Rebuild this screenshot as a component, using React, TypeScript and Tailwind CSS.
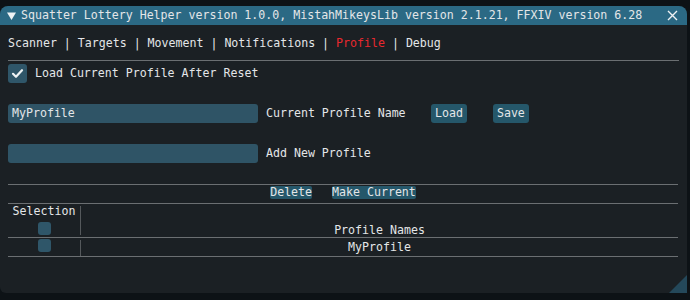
import React from 'react';

const BigCheck = () => (
  <div className="w-[19px] h-[19px] rounded-[3px] bg-[#2f5669] flex items-center justify-center shrink-0">
    <svg width="13" height="13" viewBox="0 0 13 13">
      <path d="M2 6.8 L5 9.8 L11 3.2" fill="none" stroke="#eef2f4" strokeWidth="2.2" strokeLinecap="round" strokeLinejoin="round" />
    </svg>
  </div>
);

const SmallCheck = () => <div className="w-[13px] min-w-[13px] h-[13px] rounded-[3px] bg-[#2f5669] shrink-0" />;

const Btn: React.FC<{ label: string }> = ({ label }) => (
  <div className="h-[19px] px-[4px] rounded-[3px] bg-[#25576a] flex items-center">{label}</div>
);

const Sep = () => <div className="h-px bg-[#6b6f72]" />;

export default function App() {
  return (
    <div className="w-[690px] h-[300px] bg-[#0d1216] pt-[6px] overflow-hidden font-['DejaVu_Sans_Mono',monospace] text-[11.6px] text-[#e4e6e8] leading-none">
      <div className="w-[687px] h-[287px] bg-[#1b2024] rounded-t-[8px] rounded-bl-[6px] flex flex-col relative overflow-hidden">
        {/* title bar */}
        <div className="h-[19px] bg-[#2b6984] flex items-center pl-[7px] pr-[6px] whitespace-pre">
          <svg width="9" height="8" viewBox="0 0 9 8" className="mr-[5px]">
            <path d="M0 0.5 H9 L4.5 8 Z" fill="#eef2f4" />
          </svg>
          <span className="flex-1">Squatter Lottery Helper version 1.0.0, MistahMikeysLib version 2.1.21, FFXIV version 6.28</span>
          <svg width="11" height="11" viewBox="0 0 11 11" className="mr-[3px]">
            <path d="M1 1 L10 10 M10 1 L1 10" stroke="#eef2f4" strokeWidth="1.4" />
          </svg>
        </div>

        <div className="flex flex-col pl-[8px] pr-[8px]">
          {/* menu */}
          <div className="mt-[12px] h-[14px] flex items-center whitespace-pre">
            Scanner | Targets | Movement | Notifications | <span className="text-[#e8282e]">Profile</span> | Debug
          </div>
          <div className="mt-[9px]">
            <Sep />
          </div>

          <div className="mt-[3px] flex items-center gap-[8px]">
            <BigCheck />
            <span className="pt-px">Load Current Profile After Reset</span>
          </div>

          <div className="mt-[21px] flex items-center">
            <div className="w-[250px] h-[19px] rounded-[3px] bg-[#2f5466] flex items-center pl-[4px] pt-px">MyProfile</div>
            <span className="ml-[8px] w-[165px] pt-px">Current Profile Name</span>
            <Btn label="Load" />
            <div className="ml-[26px]">
              <Btn label="Save" />
            </div>
          </div>

          <div className="mt-[21px] flex items-center">
            <div className="w-[250px] h-[19px] rounded-[3px] bg-[#2f5466]" />
            <span className="ml-[8px] pt-px">Add New Profile</span>
          </div>

          <div className="w-[670px]">
            <div className="mt-[21px]">
              <Sep />
            </div>
            <div className="mt-[1px] h-[13px] flex items-center justify-center gap-[20px]">
              <div className="h-[13px] rounded-[2px] bg-[#25576a] flex items-center">Delete</div>
              <div className="h-[13px] rounded-[2px] bg-[#25576a] flex items-center">Make Current</div>
            </div>
            <div className="mt-[4px]">
              <Sep />
            </div>

            {/* table header */}
            <div className="h-[33px] flex">
              <div className="w-[72px] flex flex-col items-center pt-[2px]">
                <span className="h-[12px] flex items-center">Selection</span>
                <div className="mt-[4px] flex">
                  <SmallCheck />
                </div>
              </div>
              <div className="w-px bg-[#55595c] mt-[2px] mb-[2px]" />
              <div className="flex-1 flex items-end justify-center">Profile Names</div>
            </div>
            <Sep />
            <div className="h-[18px] flex">
              <div className="w-[72px] flex justify-center pt-[1px]">
                <div className="flex h-[13px]">
                  <SmallCheck />
                </div>
              </div>
              <div className="w-px bg-[#55595c] mt-[2px]" />
              <div className="flex-1 flex items-center justify-center pt-px">MyProfile</div>
            </div>
            <Sep />
          </div>
        </div>

        <svg width="18" height="18" viewBox="0 0 18 18" className="absolute right-0 bottom-0">
          <path d="M18 0 L18 18 L0 18 Z" fill="#24485a" />
        </svg>
      </div>
    </div>
  );
}
